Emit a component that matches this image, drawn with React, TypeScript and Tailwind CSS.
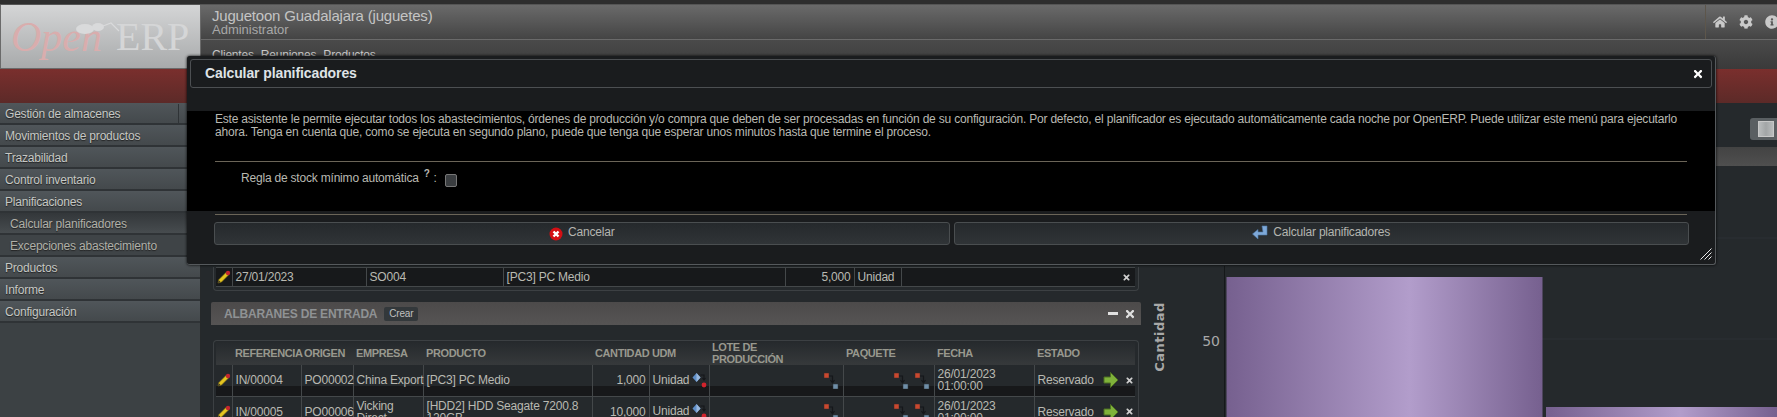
import { FaCog, FaHome, FaInfoCircle, FaTimes } from "react-icons/fa";

const menu = [
    { label: "Gestión de almacenes", toggle: true },
    { label: "Movimientos de productos" },
    { label: "Trazabilidad" },
    { label: "Control inventario" },
    { label: "Planificaciones" },
    { label: "Calcular planificadores", sub: true, active: true },
    { label: "Excepciones abastecimiento", sub: true },
    { label: "Productos" },
    { label: "Informe" },
    { label: "Configuración" },
];

const rows = [
    { ref: "IN/00004", origin: "PO00002", company: "China\u00a0Export", product: "[PC3] PC Medio", qty: "1,000" },
    { ref: "IN/00005", origin: "PO00006", company: "Vicking Direct", product: "[HDD2] HDD Seagate 7200.8 120GB", qty: "10,000" },
];

const stripe = "bg-[linear-gradient(#25292c_0,#25292c_21px,#17181a_21px,#17181a_100%)]";
const cell = "border-l border-[#44484a] px-[3px] align-middle leading-[12px]";
const head = "whitespace-nowrap px-[3px] text-left align-middle text-[11px] font-bold uppercase leading-[12px] tracking-[-0.4px] text-[#98988e]";

const Pencil = () => (
    <svg width="14" height="14" viewBox="0 0 14 14" className="mx-auto">
        <path d="M1 13 L2 9.5 L9 2.5 L11.5 5 L4.5 12 Z" fill="#e3c420" stroke="#8a7410" strokeWidth="0.6" />
        <path d="M1 13 L2 10.5 L3.5 12 Z" fill="#2a2a2a" />
        <circle cx="11" cy="3" r="2.2" fill="#c4262e" />
    </svg>
);

const Route = () => (
    <svg width="17" height="17" viewBox="0 0 17 17" className="inline-block">
        <rect x="1" y="1" width="5" height="5" fill="#c9482f" stroke="#3a2a28" strokeWidth="0.5" />
        <path d="M6 4 H9.5 V10 M7.5 8 L9.5 11 L11.5 8" fill="none" stroke="#15171a" strokeWidth="1.2" />
        <rect x="10" y="12" width="5" height="5" fill="#6f8ea8" stroke="#2c3438" strokeWidth="0.5" />
    </svg>
);

const Diamond = () => (
    <svg width="15" height="17" viewBox="0 0 15 17" className="inline-block align-middle">
        <path d="M4.5 1 L8.5 5.5 L4.5 10 L0.5 5.5 Z" fill="#5f8fc9" />
        <path d="M4.5 1 L4.5 10 L8.5 5.5 Z" fill="#9bb9de" />
        <path d="M8.5 3 H12 V7 M10.5 6 L12 8 L13.5 6" fill="none" stroke="#15171a" strokeWidth="1.1" />
        <circle cx="12" cy="13" r="2.4" fill="#d1232c" />
    </svg>
);

const GreenArrow = () => (
    <svg width="16" height="18" viewBox="0 0 16 18">
        <path d="M1 6 H7.5 V1.5 L15 9 L7.5 16.5 V12 H1 Z" fill="#7fb23a" stroke="#4d6f22" strokeWidth="1" />
    </svg>
);

const CancelIcon = () => (
    <svg width="14" height="14" viewBox="0 0 14 14">
        <circle cx="7" cy="7" r="6.5" fill="#d40f14" />
        <path d="M4.5 4.5 L9.5 9.5 M9.5 4.5 L4.5 9.5" stroke="#fff" strokeWidth="2.4" />
    </svg>
);

const ReturnIcon = () => (
    <svg width="16" height="15" viewBox="0 0 16 15">
        <path d="M10 1 H15 V10 H6 V14 L0.5 9 L6 4.5 V7 H11 Z" fill="#7ea8d8" stroke="#4f78a8" strokeWidth="0.6" />
    </svg>
);

const Chart = () => (
    <svg width="626" height="251" className="block">
        <defs>
            <linearGradient id="bar" x1="0" x2="1" y1="0" y2="0">
                <stop offset="0" stopColor="#76608f" />
                <stop offset="0.58" stopColor="#b29dcb" />
                <stop offset="1" stopColor="#76608f" />
            </linearGradient>
        </defs>
        <line x1="75" x2="626" y1="72" y2="72" stroke="#2c3134" />
        <line x1="75" x2="626" y1="173" y2="173" stroke="#2c3134" />
        <line x1="73.5" x2="73.5" y1="100" y2="251" stroke="#15181a" strokeWidth="1" />
        <rect x="75.5" y="111" width="316" height="140" fill="url(#bar)" />
        <rect x="395" y="241" width="231" height="10" fill="url(#bar)" />
        <text x="69" y="180" textAnchor="end" fontFamily="'DejaVu Sans', sans-serif" fontSize="14" letterSpacing="0" fill="#a8a8a8">50</text>
        <text transform="translate(12.5 171) rotate(-90)" textAnchor="middle" fontFamily="'DejaVu Sans', sans-serif" fontWeight="700" fontSize="13" letterSpacing="0.5" fill="#a8a8a8">Cantidad</text>
    </svg>
);

const Dialog = () => (
    <div className="absolute left-[187px] top-[56px] flex h-[209px] w-[1529px] flex-col rounded-[3px] border-r border-b border-[#55595c] bg-[#1a1c1e] shadow-[0_0_3px_#000]">
        <div className="mx-[3px] mt-[3px] flex h-[29px] items-center justify-between rounded-[3px] border border-[#4c4f52] bg-[#1a1c1e] pl-[14px] pr-[7px]">
            <span className="text-[14px] font-bold tracking-[-0.1px] text-[#dfe3e6]">Calcular planificadores</span>
            <FaTimes className="text-[12px] text-white" />
        </div>
        <div className="mt-[23px] h-[100px] bg-black px-[28px] pt-[1px] text-[12px] leading-[13px] text-[#b9b9b2]">
            <p className="h-[49px] pt-[1px]">
                Este asistente le permite ejecutar todos los abastecimientos, órdenes de producción y/o compra que deben de ser procesadas en función de su configuración. Por defecto, el planificador es ejecutado automáticamente cada noche por OpenERP. Puede utilizar este menú para ejecutarlo<br />
                ahora. Tenga en cuenta que, como se ejecuta en segundo plano, puede que tenga que esperar unos minutos hasta que termine el proceso.
            </p>
            <div className="border-t border-[#6b6558] pl-[26px] pt-[8px]">
                <div className="flex items-center">
                    <span className="text-[12px] text-[#b9b9b2]">Regla de stock mínimo automática</span>
                    <sup className="ml-[5px] text-[10px] font-bold">?</sup>
                    <span className="ml-[4px]">:</span>
                    <span className="ml-[8px] mt-[4px] h-[13px] w-[12px] rounded-[2px] border border-[#777] bg-[#3a3d40]" />
                </div>
            </div>
        </div>
        <div className="mx-[28px] mt-[3px] border-t border-[#6b6558]" />
        <div className="ml-[27px] mr-[26px] mt-[7px] flex gap-[4px]">
            <button className="flex h-[23px] flex-1 items-start justify-center gap-[5px] rounded-[3px] border border-[#4a4e50] bg-[linear-gradient(#25292c,#303437)] text-[12px] text-[#b5b5b0]">
                <span className="mt-[4px]"><CancelIcon /></span>
                <span>Cancelar</span>
            </button>
            <button className="flex h-[23px] flex-1 items-start justify-center gap-[5px] rounded-[3px] border border-[#4a4e50] bg-[linear-gradient(#25292c,#303437)] text-[12px] text-[#b5b5b0]">
                <span className="mt-[2px]"><ReturnIcon /></span>
                <span>Calcular planificadores</span>
            </button>
        </div>
        <svg width="12" height="12" viewBox="0 0 12 12" className="absolute bottom-[4px] right-[3px]">
            <path d="M0.5 11.5 L11.5 0.5 M4.5 11.5 L11.5 4.5 M8.5 11.5 L11.5 8.5" stroke="#fff" strokeWidth="0.9" />
        </svg>
    </div>
);

const App = () => {
    return (
        <div className="relative flex h-[417px] w-[1777px] flex-col overflow-hidden bg-[#25292c] font-['Liberation_Sans',Arial,sans-serif] text-[12px] tracking-[-0.2px] text-[#b9b9b2]">
            <div className="h-[4px] shrink-0 bg-[#2e2e2e]" />
            <div className="flex h-[65px] shrink-0 border-t border-[#555]">
                <div className="relative flex h-full w-[201px] shrink-0 items-center overflow-hidden border-x border-b border-[#6a6a6a] bg-[linear-gradient(#d4d5d6,#a8aaab)] pl-[10px] font-['Liberation_Serif',serif] tracking-normal">
                    <span className="text-[42px] italic leading-none text-[#d9adad]">Open</span>
                    <span className="ml-[14px] text-[40px] leading-none text-[#d5d6d7]">ERP</span>
                    <svg width="46" height="18" viewBox="0 0 46 18" className="absolute left-[74px] top-[15px]">
                        <ellipse cx="10" cy="9" rx="9" ry="5" fill="#d9dadb" />
                        <ellipse cx="23" cy="7" rx="6" ry="4" fill="#d9dadb" />
                        <path d="M28 6 L36 3 L44 11" fill="none" stroke="#d9dadb" strokeWidth="1.2" />
                    </svg>
                </div>
                <div className="flex min-w-0 flex-1 flex-col">
                    <div className="flex h-[35px] shrink-0 border-b border-[#6a6a6a] bg-[linear-gradient(#6a6a6a,#444)]">
                        <div className="flex-1 pl-[11px] pt-[3px]">
                            <div className="text-[15px] leading-[15px] text-[#c4c4c4]">Juguetoon Guadalajara (juguetes)</div>
                            <div className="text-[13px] leading-[13px] tracking-normal text-[#a8a8a8]">Administrator</div>
                        </div>
                        <div className="flex w-[72px] shrink-0 items-center gap-[12px] border-l border-[#5d564b] pl-[7px] text-[14px] text-[#c9c9c9]">
                            <FaHome className="shrink-0" />
                            <FaCog className="shrink-0" />
                            <FaInfoCircle className="shrink-0" />
                        </div>
                    </div>
                    <div className="flex flex-1 gap-[7px] bg-[linear-gradient(#4a4a4a,#3a3a3a)] pl-[11px] pt-[6px] text-[#c9c9c9]">
                        <span>Clientes</span>
                        <span>Reuniones</span>
                        <span>Productos</span>
                    </div>
                </div>
            </div>
            <div className="h-[34px] shrink-0 bg-[linear-gradient(#7a2f2d,#5c2a28)]" />
            <div className="flex min-h-0 flex-1">
                <div className="w-[201px] shrink-0 border-r border-[#26292b] bg-[#3c4144]">
                    {menu.map((item) => (
                        <div
                            key={item.label}
                            className={`flex h-[22px] items-center border-b-2 border-[#2f3336] pt-[1px] [text-shadow:0_1px_1px_#222] ${item.sub ? "pl-[10px] text-[#b0b0a8]" : "pl-[5px] text-[#c6c8c4]"} ${item.active ? "bg-[linear-gradient(#33373a,#474c4f)]" : item.sub ? "bg-[#3f4447]" : "bg-[linear-gradient(#50565a,#44494c)]"}`}
                        >
                            {item.label}
                            {item.toggle && <span className="ml-auto h-full w-[22px] border-l border-[#2f3336]" />}
                        </div>
                    ))}
                </div>
                <div className="flex min-w-0 flex-1 flex-col">
                    <div className="flex h-[44px] shrink-0 items-start justify-end pt-[15px]">
                        <div className="flex h-[22px] w-[27px] items-center rounded-l-[3px] bg-[#5a5f62] pl-[8px]">
                            <div className="h-[16px] w-[16px] border border-[#c8c8c8] bg-[linear-gradient(90deg,#b9bcbd,#a2a5a6_50%,#b9bcbd)]" />
                        </div>
                    </div>
                    <div className="flex min-h-0 flex-1">
                        <div className="ml-[10px] w-[930px] shrink-0">
                            <div className="flex h-[144px] flex-col justify-end">
                                <div className="ml-[2px] w-[926px] rounded-b-[4px] border border-t-0 border-[#3c4043] pb-[3px] pl-[2px] pr-[3px]">
                                    <table className="w-[919px] table-fixed border-collapse">
                                        <colgroup>
                                            <col className="w-[16px]" />
                                            <col className="w-[134px]" />
                                            <col className="w-[137px]" />
                                            <col className="w-[282px]" />
                                            <col className="w-[69px]" />
                                            <col className="w-[47px]" />
                                            <col />
                                        </colgroup>
                                        <tbody>
                                            <tr className="h-[19px] border-y border-[#44484a] bg-[#17191b]">
                                                <td><Pencil /></td>
                                                <td className={cell}>27/01/2023</td>
                                                <td className={cell}>SO004</td>
                                                <td className={cell}>[PC3] PC Medio</td>
                                                <td className={`${cell} text-right`}>5,000</td>
                                                <td className={cell}>Unidad</td>
                                                <td className={`${cell} text-right`}>
                                                    <FaTimes className="ml-auto mr-[1px] text-[9px] text-[#d0d0d0]" />
                                                </td>
                                            </tr>
                                        </tbody>
                                    </table>
                                </div>
                            </div>
                            <div className="mt-[11px] flex h-[23px] items-center rounded-t-[2px] bg-[linear-gradient(#4c4a4a,#565454)] pl-[13px] pr-[5px]">
                                <span className="text-[12px] font-bold text-[#8f9294]">ALBARANES DE ENTRADA</span>
                                <span className="ml-[7px] flex h-[14px] items-center rounded-[2px] bg-[#33383b] px-[5px] text-[10px] text-[#c0c0c0]">Crear</span>
                                <div className="ml-auto flex items-center gap-[6px]">
                                    <div className="h-[3px] w-[10px] bg-[#e0e0e0]" />
                                    <FaTimes className="text-[12px] text-[#e0e0e0]" />
                                </div>
                            </div>
                            <div className="ml-[2px] mt-[15px] w-[926px] rounded-t-[4px] border-x border-t border-[#3c4043] pl-[2px] pr-[3px]">
                                <table className="w-[919px] table-fixed border-collapse">
                                    <colgroup>
                                        <col className="w-[16px]" />
                                        <col className="w-[69px]" />
                                        <col className="w-[52px]" />
                                        <col className="w-[70px]" />
                                        <col className="w-[169px]" />
                                        <col className="w-[57px]" />
                                        <col className="w-[60px]" />
                                        <col className="w-[134px]" />
                                        <col className="w-[91px]" />
                                        <col className="w-[100px]" />
                                        <col />
                                    </colgroup>
                                    <thead>
                                        <tr className="h-[23px] bg-[linear-gradient(#25292c,#36393b)]">
                                            <th />
                                            <th className={head}>Referencia</th>
                                            <th className={head}>Origen</th>
                                            <th className={head}>Empresa</th>
                                            <th className={head}>Producto</th>
                                            <th className={head}>Cantidad</th>
                                            <th className={head}>UdM</th>
                                            <th className={head}>Lote de<br />producción</th>
                                            <th className={head}>Paquete</th>
                                            <th className={head}>Fecha</th>
                                            <th className={head}>Estado</th>
                                        </tr>
                                    </thead>
                                    <tbody>
                                        {rows.map((row) => (
                                            <tr key={row.ref} className="h-[31px] border-b border-[#44484a]">
                                                <td className={stripe}><Pencil /></td>
                                                <td className={`${cell} ${stripe}`}>{row.ref}</td>
                                                <td className={`${cell} ${stripe}`}>{row.origin}</td>
                                                <td className={`${cell} ${stripe} !pr-0`}>{row.company}</td>
                                                <td className={`${cell} ${stripe}`}>{row.product}</td>
                                                <td className={`${cell} ${stripe} text-right`}>{row.qty}</td>
                                                <td className={`${cell} ${stripe} whitespace-nowrap`}>Unidad <Diamond /></td>
                                                <td className={`${cell} ${stripe} text-right`}><Route /></td>
                                                <td className={`${cell} ${stripe} text-right`}><Route /> <Route /></td>
                                                <td className={`${cell} ${stripe}`}>26/01/2023<br />01:00:00</td>
                                                <td className={`${cell} ${stripe}`}>
                                                    <div className="flex items-center">
                                                        <span>Reservado</span>
                                                        <span className="ml-[9px] shrink-0"><GreenArrow /></span>
                                                        <FaTimes className="ml-[6px] shrink-0 text-[9px] text-[#d0d0d0]" />
                                                    </div>
                                                </td>
                                            </tr>
                                        ))}
                                    </tbody>
                                </table>
                            </div>
                        </div>
                        <div className="ml-[10px] min-w-0 flex-1">
                            <div className="h-[19px] bg-[linear-gradient(#434343,#4f4f4f)]" />
                            <Chart />
                        </div>
                    </div>
                </div>
            </div>
            <Dialog />
        </div>
    );
};

export default App;
